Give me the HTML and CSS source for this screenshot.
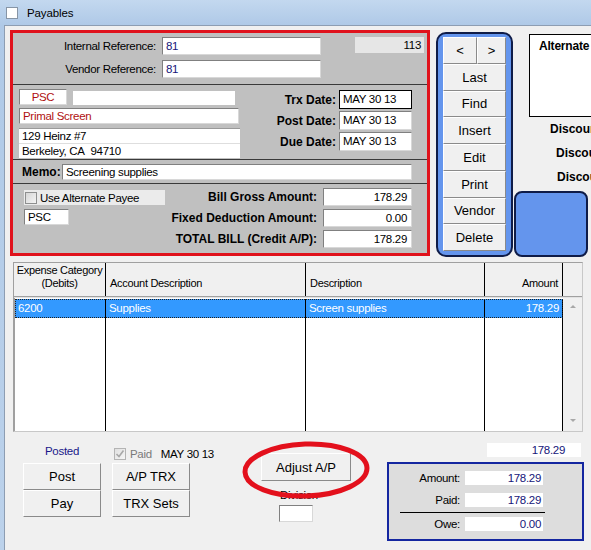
FILE: index.html
```html
<!DOCTYPE html>
<html>
<head>
<meta charset="utf-8">
<title>Payables</title>
<link rel="stylesheet" href="styles.css">
</head>
<body>
<div class="titlebar"><span class="ticon"></span><span class="ttext">Payables</span></div>
<div class="frame">
  <div class="client">
    <div class="top">
      <div class="redbox">
        <div class="sec sec1">
          <div class="refs">
            <div class="frow"><span class="lbl">Internal Reference:</span><span class="inp navy w159">81</span></div>
            <div class="frow"><span class="lbl">Vendor Reference:</span><span class="inp navy w159">81</span></div>
          </div>
          <div class="seq">113</div>
        </div>
        <div class="sec sec2">
          <div class="vendor">
            <div class="vrow"><span class="inp code red">PSC</span><span class="blank"></span></div>
            <div class="inp vname red">Primal Screen</div>
            <div class="addr">
              <div class="aline first">129 Heinz #7</div>
              <div class="aline">Berkeley, CA&nbsp; 94710</div>
            </div>
          </div>
          <div class="dates">
            <span class="blbl">Trx Date:</span><span class="inp date focus">MAY 30 13</span>
            <span class="blbl">Post Date:</span><span class="inp date">MAY 30 13</span>
            <span class="blbl">Due Date:</span><span class="inp date">MAY 30 13</span>
          </div>
        </div>
        <div class="sec sec3">
          <span class="blbl memo">Memo:</span><span class="inp memoinp">Screening supplies</span>
        </div>
        <div class="sec sec4">
          <div class="alt">
            <div class="altchk"><span class="chk"></span><span>Use Alternate Payee</span></div>
            <span class="inp altcode">PSC</span>
          </div>
          <div class="amts">
            <span class="blbl">Bill Gross Amount:</span><span class="inp amt">178.29</span>
            <span class="blbl">Fixed Deduction Amount:</span><span class="inp amt">0.00</span>
            <span class="blbl">TOTAL BILL (Credit A/P):</span><span class="inp amt">178.29</span>
          </div>
        </div>
      </div>
      <div class="nav">
        <div class="navpair"><span class="btn prev">&lt;</span><span class="btn next">&gt;</span></div>
        <span class="btn">Last</span>
        <span class="btn">Find</span>
        <span class="btn">Insert</span>
        <span class="btn">Edit</span>
        <span class="btn">Print</span>
        <span class="btn">Vendor</span>
        <span class="btn">Delete</span>
      </div>
      <div class="side">
        <div class="altbox">Alternate</div>
        <div class="disc d1">Discount %:</div>
        <div class="disc d2">Discount Date:</div>
        <div class="disc d3">Discount Amt:</div>
        <div class="sideblue"></div>
      </div>
    </div>

    <div class="grid">
      <div class="ghead">
        <div class="gh h1">Expense Category<br>(Debits)</div>
        <div class="gh c2">Account Description</div>
        <div class="gh c3">Description</div>
        <div class="gh c4 right">Amount</div>
        <div class="gh hs"></div>
      </div>
      <div class="gdiv"></div>
      <div class="gbody">
        <div class="grows">
          <div class="grow gsel">
            <div class="gc c1">6200</div>
            <div class="gc c2">Supplies</div>
            <div class="gc c3">Screen supplies</div>
            <div class="gc c4 right">178.29</div>
          </div>
          <div class="gfill">
            <div class="gc c1"></div>
            <div class="gc c2"></div>
            <div class="gc c3"></div>
            <div class="gc c4"></div>
          </div>
        </div>
        <div class="vscroll"><span class="arr up"></span><span class="arr down"></span></div>
      </div>
    </div>

    <div class="bottom">
      <div class="colA">
        <div class="posted">Posted</div>
        <span class="btn bbtn">Post</span>
        <span class="btn bbtn">Pay</span>
      </div>
      <div class="colB">
        <div class="paidrow">
          <span class="chk checked"><svg width="10" height="10" viewBox="0 0 10 10"><path d="M1.5 5 L4 7.5 L8.5 1.5" fill="none" stroke="#a8a8a8" stroke-width="1.6"/></svg></span>
          <span class="paid">Paid</span>
          <span class="pdate">MAY 30 13</span>
        </div>
        <span class="btn bbtn">A/P TRX</span>
        <span class="btn bbtn">TRX Sets</span>
      </div>
      <div class="colC">
        <span class="btn adjust">Adjust A/P</span>
        <span class="divlbl">Division</span>
        <span class="divinp"></span>
        <svg class="ring" width="132" height="64" viewBox="0 0 132 64"><ellipse cx="66" cy="30" rx="61" ry="26" fill="none" stroke="#e3101c" stroke-width="5" transform="rotate(-2 66 30)"/></svg>
      </div>
      <div class="colD">
        <div class="total">178.29</div>
        <div class="summary">
          <div class="srow"><span class="slbl">Amount:</span><span class="sval">178.29</span></div>
          <div class="srow"><span class="slbl">Paid:</span><span class="sval">178.29</span></div>
          <div class="sline"></div>
          <div class="srow"><span class="slbl">Owe:</span><span class="sval">0.00</span></div>
        </div>
      </div>
    </div>
  </div>
</div>
</body>
</html>
```

FILE: styles.css
```css
* { box-sizing: border-box; }
html, body { margin: 0; padding: 0; }
body {
  width: 591px;
  height: 550px;
  overflow: hidden;
  background: #f0f0f0;
  font-family: "Liberation Sans", Arial, sans-serif;
  font-size: 11.5px;
  letter-spacing: -0.3px;
  color: #000;
}

/* title bar */
.titlebar {
  height: 25px;
  background: linear-gradient(#c3d8ef, #afc9e7);
  display: flex;
  align-items: center;
  padding-left: 6px;
}
.ticon {
  width: 12px;
  height: 12px;
  background: #fff;
  border: 1px solid #8795a6;
  margin-right: 9px;
}
.ttext { font-size: 11.5px; letter-spacing: -0.1px; }

.frame {
  display: flex;
  height: 525px;
  background: linear-gradient(#afc9e7, #bcd2eb);
  padding-left: 4px;
}
.client {
  flex: 1;
  background: #f0f0f0;
  border-left: 1px solid #8d9db2;
  border-top: 1px solid #8d9db2;
  padding: 4px 0 0 5px;
}

/* top row */
.top {
  display: flex;
  align-items: flex-start;
  height: 227px;
}
.redbox {
  width: 420px;
  height: 226px;
  border: 3px solid #e0121c;
  background: #c0c0c0;
  display: flex;
  flex-direction: column;
}
.sec { border-bottom: 1px solid #3a3a3a; }

.inp {
  display: block;
  background: #fff;
  border: 1px solid;
  border-color: #808080 #d8d8d8 #d8d8d8 #808080;
  height: 18px;
  line-height: 16px;
  padding: 0 3px;
  white-space: nowrap;
  overflow: hidden;
}
.navy { color: #16167a; }
.red { color: #b01010; }

.blbl {
  font-family: "Liberation Sans", Arial, sans-serif;
  font-weight: bold;
  font-size: 12px;
  letter-spacing: 0;
  text-align: right;
  white-space: nowrap;
}

.sec1 {
  height: 52px;
  display: flex;
  padding-top: 4px;
}
.refs { display: flex; flex-direction: column; gap: 5px; }
.frow { display: flex; align-items: center; gap: 6px; }
.lbl { width: 143px; text-align: right; white-space: nowrap; }
.w159 { width: 159px; }
.seq {
  margin-left: 34px;
  width: 69px;
  height: 16px;
  background: #e6e6e6;
  text-align: right;
  padding-right: 3px;
  line-height: 16px;
}

.sec2 {
  height: 75px;
  display: flex;
  align-items: flex-start;
  justify-content: space-between;
  padding: 4px 15px 0 6px;
}
.vendor { width: 221px; display: flex; flex-direction: column; }
.vrow { display: flex; align-items: flex-end; gap: 6px; height: 16px; }
.code { width: 48px; height: 16px; line-height: 14px; text-align: center; }
.blank { width: 162px; height: 14px; background: #fff; }
.vname { margin-top: 3px; width: 220px; height: 16px; line-height: 14px; }
.addr {
  margin-top: 4px;
  width: 221px;
  height: 30px;
  background: #fff;
  border-top: 1px solid #9a9a9a;
}
.aline { height: 14.5px; line-height: 14px; padding-left: 3px; white-space: nowrap; }
.aline.first { border-bottom: 1px solid #dedede; }

.dates {
  display: grid;
  grid-template-columns: auto 73px;
  grid-auto-rows: 19px;
  align-content: start;
  column-gap: 3px;
  row-gap: 2px;
  align-items: center;
  margin-top: 1px;
}
.date { height: 19px; line-height: 17px; }
.focus { border: 1px solid #000; }

.sec3 {
  height: 24px;
  display: flex;
  align-items: center;
  padding-left: 9px;
}
.memo { width: 40px; text-align: left; }
.memoinp { width: 350px; height: 16px; line-height: 14px; }

.sec4 {
  border-bottom: none;
  flex: 1;
  display: flex;
  align-items: flex-start;
  justify-content: space-between;
  padding: 4px 15px 0 11px;
}
.alt { margin-top: 2px; display: flex; flex-direction: column; gap: 4px; }
.altchk {
  width: 141px;
  height: 15px;
  background: #ebebeb;
  display: flex;
  align-items: center;
  gap: 3px;
  padding-left: 1px;
  white-space: nowrap;
}
.chk {
  width: 12px;
  height: 12px;
  border: 1px solid #8e8f8f;
  background: linear-gradient(135deg, #d6d6d6, #f4f4f4);
  display: flex;
  align-items: center;
  justify-content: center;
}
.altcode { width: 45px; height: 16px; line-height: 14px; }
.amts {
  display: grid;
  grid-template-columns: auto 89px;
  grid-auto-rows: 18px;
  align-content: start;
  column-gap: 6px;
  row-gap: 3px;
  align-items: center;
}
.amt { height: 18px; text-align: right; padding-right: 4px; }

/* navigation */
.nav {
  margin-left: 6px;
  margin-top: 2px;
  width: 77px;
  height: 225px;
  border: 2px solid #0f1c48;
  border-radius: 10px;
  background: #6495ed;
  padding: 3px 5px 0 5px;
  display: grid;
  grid-template-rows: repeat(8, 26.75px);
}
.btn {
  background: #f0f0f0;
  border: 1px solid;
  border-color: #ffffff #8a8a8a #8a8a8a #ffffff;
  font-family: "Liberation Sans", Arial, sans-serif;
  font-size: 13px;
  letter-spacing: 0;
  display: flex;
  align-items: center;
  justify-content: center;
  white-space: nowrap;
}
.navpair { display: flex; }
.prev { width: 34px; }
.next { flex: 1; }

.side {
  margin-left: 1px;
  width: 77px;
  height: 227px;
  overflow: hidden;
}
.altbox {
  margin: 4px 0 0 15px;
  width: 90px;
  height: 83px;
  border: 1px solid #000;
  background: #fff;
  padding: 4px 0 0 9px;
  font-weight: bold;
  font-size: 12px;
  letter-spacing: -0.2px;
  white-space: nowrap;
}
.disc {
  height: 24px;
  line-height: 24px;
  font-weight: bold;
  font-size: 12px;
  letter-spacing: 0;
  white-space: nowrap;
}
.d1 { padding-left: 36px; }
.d2 { padding-left: 42px; }
.d3 { padding-left: 43px; }
.sideblue {
  margin-top: 2px;
  width: 74px;
  height: 66px;
  border: 2px solid #0f1c48;
  border-radius: 8px;
  background: #6495ed;
}

/* grid */
.grid {
  margin: 5px 0 0 3px;
  width: 570px;
  height: 170px;
  border: 1px solid #a0a0a0;
  border-right-color: #c8c8c8;
  border-bottom-color: #c8c8c8;
  display: flex;
  flex-direction: column;
  background: #f0f0f0;
}
.ghead { display: flex; height: 33px; font-size: 11px; }
.gh {
  border-right: 1px solid #000;
  display: flex;
  align-items: flex-end;
  padding: 0 4px 6px;
  line-height: 13px;
  white-space: nowrap;
}
.gh.h1 { width: 92px; justify-content: center; text-align: center; padding: 0 0 6px; }
.gh.hs { flex: 1; border-right: none; }
.gh.right, .gc.right { justify-content: flex-end; text-align: right; }
.gdiv {
  height: 2px;
  border-top: 1px solid #a0a0a0;
  background: #e2e2e2;
}
.gbody {
  flex: 1;
  display: flex;
  border-left: 1px solid #a0a0a0;
}
.grows {
  width: 548px;
  display: flex;
  flex-direction: column;
  background: #fff;
  padding-top: 1px;
}
.grow { display: flex; height: 19px; }
.gsel {
  background: #3399ff;
  color: #fff;
  outline: 1px dotted #202020;
  outline-offset: -1px;
}
.gfill { flex: 1; display: flex; }
.gc {
  border-right: 1px solid #000;
  line-height: 19px;
  padding: 0 3px;
  white-space: nowrap;
}
.c1 { width: 91px; }
.c2 { width: 200px; }
.c3 { width: 179px; }
.c4 { width: 78px; }
.vscroll {
  flex: 1;
  background: #f0f0f0;
  display: flex;
  flex-direction: column;
  justify-content: space-between;
  align-items: center;
  padding: 7px 0 9px;
}
.arr { width: 0; height: 0; border-left: 3px solid transparent; border-right: 3px solid transparent; }
.arr.up { border-bottom: 3px solid #a8a8a8; }
.arr.down { border-top: 3px solid #a8a8a8; }

/* bottom */
.bottom { display: flex; }
.colA { margin-left: 13px; width: 78px; padding-top: 12px; display: flex; flex-direction: column; }
.posted { height: 19px; text-align: center; color: #18188a; line-height: 14px; }
.bbtn { width: 78px; height: 27px; }
.colB { margin-left: 11px; width: 101px; padding-top: 12px; display: flex; flex-direction: column; }
.paidrow { height: 19px; display: flex; align-items: center; padding-left: 2px; white-space: nowrap; }
.chk.checked { background: linear-gradient(135deg, #e0e0e0, #f6f6f6); border-color: #b4b4b4; }
.paid { color: #7a7a7a; margin-left: 4px; }
.pdate { margin-left: 9px; }
.colC {
  margin-left: 29px;
  width: 128px;
  position: relative;
  display: flex;
  flex-direction: column;
  align-items: flex-start;
  padding-top: 21px;
}
.adjust { margin-left: 19px; width: 90px; height: 28px; }
.divlbl { margin: 8px 0 0 38px; line-height: 13px; height: 13px; }
.divinp {
  margin: 3px 0 0 37px;
  width: 34px;
  height: 17px;
  background: #fff;
  border: 1px solid;
  border-color: #808080 #d8d8d8 #d8d8d8 #808080;
}
.ring { position: absolute; left: -2px; top: 8px; }
.colD { margin-left: 17px; width: 197px; padding-top: 11px; }
.total {
  margin-left: 100px;
  width: 94px;
  height: 14px;
  background: #fff;
  color: #16167a;
  text-align: right;
  padding-right: 16px;
  line-height: 14px;
}
.summary {
  margin-top: 5px;
  width: 197px;
  height: 79px;
  border: 2px solid #1426a0;
  background: #dddddd;
  padding-top: 7px;
}
.srow {
  display: grid;
  grid-template-columns: 71px 78px;
  column-gap: 5px;
  height: 14px;
}
.srow + .srow { margin-top: 8px; }
.slbl { text-align: right; line-height: 14px; }
.sval {
  background: #fff;
  color: #16167a;
  text-align: right;
  padding-right: 2px;
  line-height: 14px;
}
.sline {
  margin: 5px 0 4px 11px;
  width: 145px;
  height: 1px;
  background: #000;
}
```
